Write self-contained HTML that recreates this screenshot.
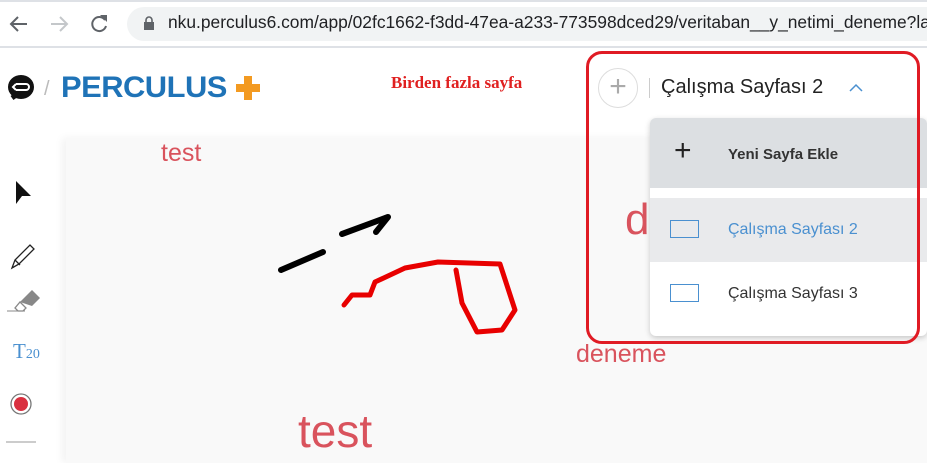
<!DOCTYPE html>
<html><head><meta charset="utf-8"><style>
body{margin:0;width:927px;height:463px;overflow:hidden;background:#fff;font-family:"Liberation Sans",sans-serif;position:relative}
.a{position:absolute}
</style></head><body>
<div class="a" style="left:0;top:0;width:927px;height:2px;background:#dee1e6"></div>
<div class="a" style="left:0;top:46px;width:927px;height:2px;background:#dee1e6"></div>
<svg class="a" style="left:0;top:0" width="130" height="46" viewBox="0 0 130 46"><g fill="none" stroke="#5f6368" stroke-width="2"><path d="M27 24H11M18 17l-7 7 7 7"/></g><g fill="none" stroke="#c4c7ca" stroke-width="2"><path d="M51 24h16M60 17l7 7-7 7"/></g><path d="M105 20a7 7 0 1 0 1 6" fill="none" stroke="#5f6368" stroke-width="2"/><path d="M100 15l7 0 0 7z" fill="#5f6368"/></svg>
<div class="a" style="left:127px;top:7px;width:820px;height:34px;border-radius:17px;background:#f1f3f4"></div>
<svg class="a" style="left:143px;top:15px" width="12" height="16"><rect x="1" y="7" width="10" height="8" fill="#5f6368"/><path d="M3 7V5a3 3 0 0 1 6 0v2" stroke="#5f6368" stroke-width="1.6" fill="none"/></svg>
<div class="a" style="left:168px;top:12px;font-size:17.4px;color:#202124;white-space:nowrap">nku.perculus6.com/app/02fc1662-f3dd-47ea-a233-773598dced29/veritaban__y_netimi_deneme?la</div>
<svg class="a" style="left:5px;top:72px" width="32" height="32"><ellipse cx="16" cy="15" rx="13" ry="12" fill="#111"/><path d="M7 26l7-5" stroke="#111" stroke-width="5"/><path d="M11 12h10a3 3 0 0 1 0 6H11M11 12l-3 3 3 3" stroke="#fff" stroke-width="2" fill="none"/></svg>
<div class="a" style="left:44px;top:78px;font-size:20px;color:#bbb">/</div>
<div class="a" style="left:61px;top:71px;font-size:30px;font-weight:bold;color:#1f73b7;letter-spacing:-0.5px;transform:scaleX(1.03);transform-origin:left">PERCULUS</div>
<div class="a" style="left:236px;top:84px;width:24px;height:8px;background:#f39a21"></div>
<div class="a" style="left:244px;top:76px;width:8px;height:24px;background:#f39a21"></div>
<div class="a" style="left:391px;top:73px;font-family:'Liberation Serif',serif;font-weight:bold;font-size:17px;color:#e02020">Birden fazla sayfa</div>
<div class="a" style="left:66px;top:138px;width:861px;height:325px;background:#f9f9f9;box-shadow:-4px 0 8px rgba(0,0,0,0.05)"></div>
<svg class="a" style="left:0;top:170px" width="60" height="293"><path d="M16 11l15 15h-9l-6 8z" fill="#111"/><path d="M12 98l3-8 15-15 4 4-15 15z M15 90l5 5" fill="none" stroke="#222" stroke-width="1.3"/><path d="M20 132l12-12 8 8-8 8z" fill="#888"/><path d="M20 132l6 6-3 3h-5l-3-3z" fill="#fff" stroke="#888" stroke-width="1.3"/><line x1="7" y1="141" x2="25" y2="141" stroke="#888" stroke-width="1"/><circle cx="21" cy="234" r="10" fill="#fff" stroke="#777" stroke-width="1.3"/><circle cx="21" cy="234" r="7" fill="#d9303f"/><line x1="6" y1="272" x2="36" y2="272" stroke="#bbb" stroke-width="1.5"/></svg>
<div class="a" style="left:13px;top:339px;font-family:'Liberation Serif',serif;font-size:21px;color:#4a90d0">T<span style="font-size:14px">20</span></div>
<div class="a" style="left:161px;top:139px;font-size:25px;color:#d9535d">test</div>
<div class="a" style="left:576px;top:340px;font-size:25px;color:#d9535d">deneme</div>
<div class="a" style="left:298px;top:404px;font-size:46px;color:#d9535d">test</div>
<div class="a" style="left:625px;top:195px;font-size:44px;color:#d9535d">d</div>
<svg class="a" style="left:0;top:0" width="927" height="463"><g fill="none" stroke-linecap="round" stroke-linejoin="round"><path d="M281 270L323 252" stroke="#000" stroke-width="6"/><path d="M342 234L388 217 376 232" stroke="#000" stroke-width="6"/><path d="M344 305L352 295 370 295 375 282 405 268 438 262 500 264 515 310 502 330 477 332 462 303 456 270" stroke="#e80000" stroke-width="5"/></g></svg>
<div class="a" style="left:598px;top:68px;width:38px;height:38px;border-radius:50%;border:1px solid #ddd;background:#fff;color:#aaa;font-size:30px;line-height:36px;text-align:center">+</div>
<div class="a" style="left:649px;top:78px;width:1px;height:20px;background:#ccc"></div>
<div class="a" style="left:661px;top:76px;font-size:20px;color:#222">Çalışma Sayfası 2</div>
<svg class="a" style="left:848px;top:82px" width="16" height="12"><path d="M2 9l6-6 6 6" fill="none" stroke="#4a90d0" stroke-width="1.5"/></svg>
<div class="a" style="left:650px;top:118px;width:277px;height:218px;background:#fff;border-radius:6px;box-shadow:0 2px 6px rgba(0,0,0,0.2);overflow:hidden">
<div style="height:70px;background:#dcdfe2;position:relative"><div class="a" style="left:24px;top:16px;font-size:30px;color:#222">+</div><div class="a" style="left:78px;top:28px;font-size:15px;font-weight:bold;color:#333">Yeni Sayfa Ekle</div></div>
<div class="a" style="top:80px;left:0;width:277px;height:64px;background:#e9eaec"></div>
<div class="a" style="left:20px;top:102px;width:29px;height:18px;border:1.5px solid #4a90d0;box-sizing:border-box"></div>
<div class="a" style="left:78px;top:103px;font-size:16px;color:#4a90d0">Çalışma Sayfası 2</div>
<div class="a" style="left:20px;top:166px;width:29px;height:18px;border:1.5px solid #4a90d0;box-sizing:border-box"></div>
<div class="a" style="left:78px;top:167px;font-size:16px;color:#333">Çalışma Sayfası 3</div>
</div>
<div class="a" style="left:586px;top:51px;width:334px;height:293px;border:3px solid #e01b24;border-radius:16px;box-sizing:border-box"></div>
</body></html>
